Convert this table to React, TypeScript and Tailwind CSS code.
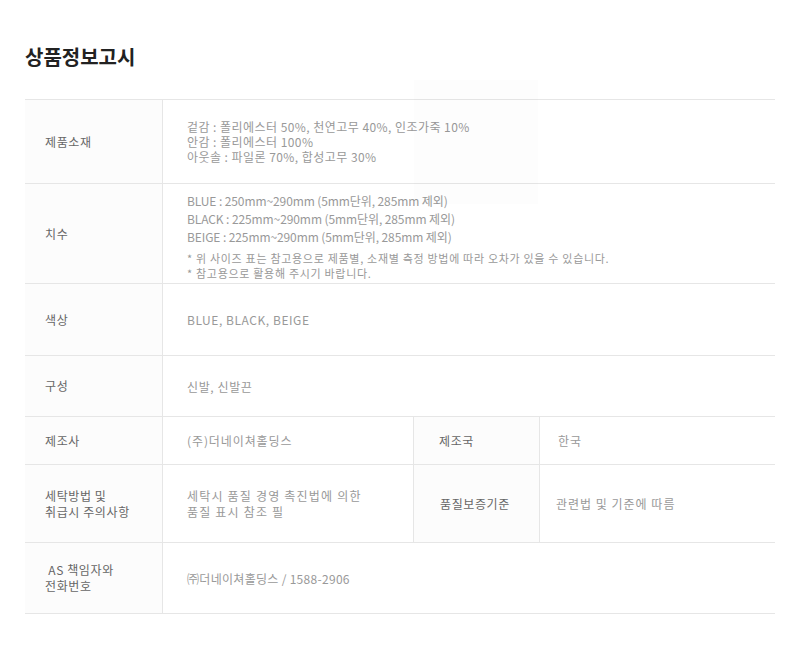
import React from "react";

const font = { fontFamily: '"Noto Sans CJK KR", "Noto Sans", sans-serif' };

function H({ children, className = "" }: { children: React.ReactNode; className?: string }) {
  return (
    <div className={"flex items-center bg-[#fcfcfc] pl-[20px] text-[12px] leading-[16px] tracking-[0.6px] text-[#666] " + className}>
      <div>{children}</div>
    </div>
  );
}

function V({ children, className = "" }: { children: React.ReactNode; className?: string }) {
  return (
    <div className={"flex items-center border-l border-[#e6e6e6] pl-[24px] text-[12px] leading-[15px] text-[#999] " + className}>
      <div>{children}</div>
    </div>
  );
}

export default function App() {
  return (
    <div className="relative min-h-[663px] w-[800px] bg-white px-[25px] pt-[43px]" style={font}>
      <h1 className="text-[20px] font-bold leading-[28px] text-[#222]">상품정보고시</h1>
      <div className="mt-[28px] grid grid-cols-[137px_251px_126px_1fr] border-t border-[#e6e6e6]">
        {/* row 1 */}
        <H className="h-[84px] border-b border-[#e6e6e6]">제품소재</H>
        <V className="col-span-3 h-[84px] border-b border-[#e6e6e6]">
          <div className="leading-[15px] tracking-[0.45px]">
            <div>겉감 : 폴리에스터 50%, 천연고무 40%, 인조가죽 10%</div>
            <div>안감 : 폴리에스터 100%</div>
            <div>아웃솔 : 파일론 70%, 합성고무 30%</div>
          </div>
        </V>
        {/* row 2 */}
        <H className="h-[100px] border-b border-[#e6e6e6]">치수</H>
        <div className="col-span-3 h-[100px] border-b border-l border-[#e6e6e6] pl-[24px] pt-[8px] text-[12px] text-[#999]">
          <div className="leading-[18px] tracking-[-0.1px]">
            <div>BLUE : 250mm~290mm (5mm단위, 285mm 제외)</div>
            <div>BLACK : 225mm~290mm (5mm단위, 285mm 제외)</div>
            <div>BEIGE : 225mm~290mm (5mm단위, 285mm 제외)</div>
          </div>
          <div className="mt-[5px] text-[11px] leading-[15px] tracking-[0.7px]">
            <div>* 위 사이즈 표는 참고용으로 제품별, 소재별 측정 방법에 따라 오차가 있을 수 있습니다.</div>
            <div>* 참고용으로 활용해 주시기 바랍니다.</div>
          </div>
        </div>
        {/* row 3 */}
        <H className="h-[72px] border-b border-[#e6e6e6]">색상</H>
        <V className="col-span-3 h-[72px] border-b border-[#e6e6e6] tracking-[0.55px]">BLUE, BLACK, BEIGE</V>
        {/* row 4 */}
        <H className="h-[61px] border-b border-[#e6e6e6]">구성</H>
        <V className="col-span-3 h-[61px] border-b border-[#e6e6e6] tracking-[0.6px]">신발, 신발끈</V>
        {/* row 5 */}
        <H className="h-[48px] border-b border-[#e6e6e6]">제조사</H>
        <V className="h-[48px] border-b border-[#e6e6e6] tracking-[0.9px]">(주)더네이쳐홀딩스</V>
        <div className="flex h-[48px] items-center border-b border-l border-[#e6e6e6] bg-[#fcfcfc] pl-[25px] text-[12px] tracking-[0.6px] text-[#666]">제조국</div>
        <div className="flex h-[48px] items-center border-b border-l border-[#e6e6e6] pl-[18px] text-[12px] tracking-[1px] text-[#999]">한국</div>
        {/* row 6 */}
        <H className="h-[78px] border-b border-[#e6e6e6]">
          <div>세탁방법 및</div>
          <div>취급시 주의사항</div>
        </H>
        <V className="h-[78px] border-b border-[#e6e6e6]">
          <div className="leading-[16px] tracking-[1.2px]">
            <div>세탁시 품질 경영 촉진법에 의한</div>
            <div>품질 표시 참조 필</div>
          </div>
        </V>
        <div className="flex h-[78px] items-center border-b border-l border-[#e6e6e6] bg-[#fcfcfc] pl-[26px] text-[12px] tracking-[0.6px] text-[#666]">품질보증기준</div>
        <div className="flex h-[78px] items-center border-b border-l border-[#e6e6e6] pl-[16px] text-[12px] tracking-[1px] text-[#999]">관련법 및 기준에 따름</div>
        {/* row 7 */}
        <H className="h-[71px] border-b border-[#e6e6e6]">
          <div>&nbsp;AS 책임자와</div>
          <div>전화번호</div>
        </H>
        <V className="col-span-3 h-[71px] border-b border-[#e6e6e6] tracking-[0.3px]">㈜더네이쳐홀딩스 / 1588-2906</V>
      </div>
      <div className="pointer-events-none absolute left-[414px] top-[80px] h-[124px] w-[124px] bg-black/[0.008]" />
    </div>
  );
}
